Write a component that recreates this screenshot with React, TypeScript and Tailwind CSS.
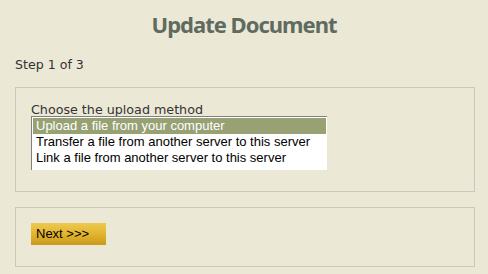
import React from "react";

const items = [
  "Upload a file from your computer",
  "Transfer a file from another server to this server",
  "Link a file from another server to this server",
];

export default function App() {
  return (
    <div className="w-[488px] h-[274px] overflow-hidden bg-[#ebe8d6] flex flex-col">
      <h1 className="pt-[10px] text-center text-[22px] font-bold leading-[28px] tracking-[-1px] text-[#5f6b60] font-['Noto_Sans',sans-serif]">
        Update Document
      </h1>
      <p className="mt-[20px] ml-[15px] text-[12.6px] leading-[14px] text-[#333333] font-['DejaVu_Sans',sans-serif]">
        Step 1 of 3
      </p>
      <fieldset className="mt-[15px] ml-[15px] w-[460px] h-[105px] border border-[#c9c8bf] pt-[15px] pl-[15px] flex flex-col">
        <label className="text-[12.7px] leading-[13px] text-[#333333] font-['DejaVu_Sans',sans-serif]">
          Choose the upload method
        </label>
        <div className="w-[296px] h-[54px] border-t border-l border-[#7f7f7f] bg-white p-px flex flex-col">
          {items.map((t, i) => (
            <div
              key={t}
              className={
                i === 0
                  ? "h-[16px] pl-[3px] text-[13px] leading-[16px] whitespace-nowrap font-['Liberation_Sans',Arial,sans-serif] bg-[#97a174] text-white"
                  : "h-[16px] pl-[3px] text-[13px] leading-[16px] whitespace-nowrap font-['Liberation_Sans',Arial,sans-serif] text-black"
              }
            >
              {t}
            </div>
          ))}
        </div>
      </fieldset>
      <fieldset className="mt-[15px] ml-[15px] w-[460px] h-[60px] border border-[#c9c8bf] pt-[15px] pl-[15px] flex">
        <button className="w-[75px] h-[22px] pl-[5px] text-left text-[13px] leading-[22px] text-black font-['Liberation_Sans',Arial,sans-serif] bg-gradient-to-b from-[#ecc94e] via-[#e3b52c] to-[#c99a1c]">
          Next &gt;&gt;&gt;
        </button>
      </fieldset>
    </div>
  );
}
